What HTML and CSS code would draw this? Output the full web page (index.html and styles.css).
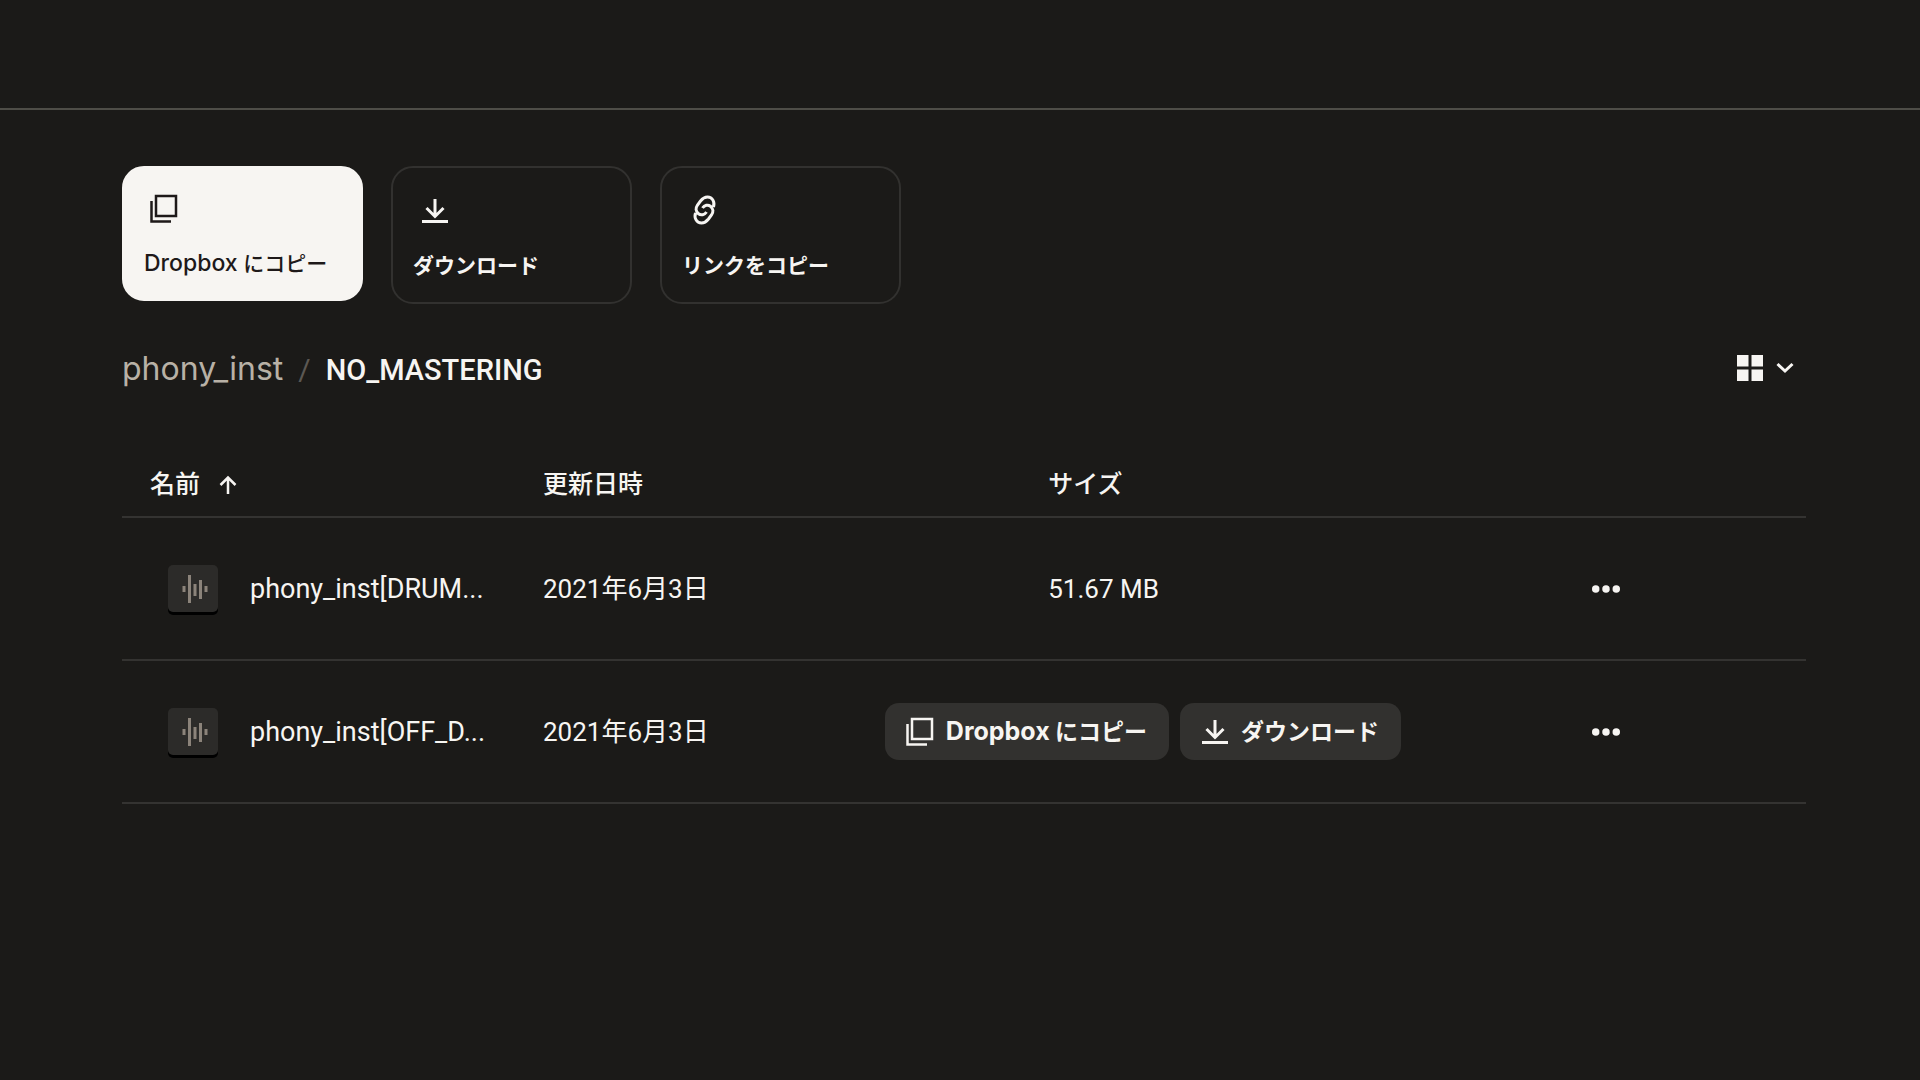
FILE: index.html
```html
<!DOCTYPE html>
<html lang="ja">
<head>
<meta charset="utf-8">
<title>NO_MASTERING</title>
<link rel="stylesheet" href="styles.css">
</head>
<body>
<svg class="sprite" aria-hidden="true">
  <symbol id="copy" viewBox="0 0 30 30"><path d="M7 2H27V22H7ZM2.500 7V27.500H22" fill="none" stroke="currentColor" stroke-width="2.500"/></symbol>
  <symbol id="download" viewBox="0 0 30 30"><path d="M15 3V20M6.500 12L15 20.500L23.500 12M2 25.500H28" fill="none" stroke="currentColor" stroke-width="3"/></symbol>
</svg>
<header class="topbar"></header>
<main class="content">
  <div class="actions">
    <button class="card card-primary"><svg class="icon"><use href="#copy"/></svg><span><span class="latin">Dropbox</span> にコピー</span></button>
    <button class="card"><svg class="icon"><use href="#download"/></svg><span>ダウンロード</span></button>
    <button class="card"><svg class="icon link-icon" viewBox="0 0 30 30"><path d="M23.500 11C25 6 22.500 1 17.500 1C14.500 1 12.500 2.500 10.500 5L7.500 9C5.500 12 5.500 15.500 8.500 17.800C11 19.700 14.500 19 16.500 16M5.500 17C4 22 6.500 27 11.500 27C14.500 27 16.500 25.500 18.500 23L21.500 19C23.500 16 23.500 12.500 20.500 10.200C18 8.300 14.500 9 12.500 12" fill="none" stroke="currentColor" stroke-width="3"/></svg><span>リンクをコピー</span></button>
  </div>
  <div class="pathbar">
    <nav class="crumbs"><a href="#">phony_inst</a><span class="slash">/</span><h1>NO_MASTERING</h1></nav>
    <button class="view" aria-label="表示の切り替え">
      <svg class="grid-icon" viewBox="0 0 26 26"><path d="M0 0H11.500V11.500H0ZM14.500 0H26V11.500H14.500ZM0 14.500H11.500V26H0ZM14.500 14.500H26V26H14.500Z" fill="currentColor"/></svg>
      <svg class="chevron" viewBox="0 0 18 12"><path d="M1.500 2L9 9L16.500 2" fill="none" stroke="currentColor" stroke-width="3"/></svg>
    </button>
  </div>
  <table class="files">
    <colgroup><col class="c-name"><col class="c-date"><col class="c-gap"><col class="c-size"><col class="c-menu"></colgroup>
    <thead>
      <tr><th class="first"><span class="sort">名前 <svg class="arrow" viewBox="0 0 18 20"><path d="M9 19V3M1.500 10L9 2.500L16.500 10" fill="none" stroke="currentColor" stroke-width="2.500"/></svg></span></th><th colspan="2">更新日時</th><th>サイズ</th><th></th></tr>
    </thead>
    <tbody>
      <tr>
        <td><div class="file"><span class="thumb"><svg class="wave" viewBox="0 0 26 30"><path d="M2 12V18M7.500 1V29M13 10V22M18.500 6V25M24 12V18" fill="none" stroke="currentColor" stroke-width="3"/></svg></span><a href="#">phony_inst[DRUM...</a></div></td>
        <td colspan="2">2021年6月3日</td>
        <td>51.67 MB</td>
        <td><button class="more" aria-label="その他"><svg class="dots" viewBox="0 0 30 8"><circle cx="4" cy="4" r="4"/><circle cx="15" cy="4" r="4"/><circle cx="26" cy="4" r="4"/></svg></button></td>
      </tr>
      <tr>
        <td><div class="file"><span class="thumb"><svg class="wave" viewBox="0 0 26 30"><path d="M2 12V18M7.500 1V29M13 10V22M18.500 6V25M24 12V18" fill="none" stroke="currentColor" stroke-width="3"/></svg></span><a href="#">phony_inst[OFF_D...</a></div></td>
        <td>2021年6月3日</td>
        <td colspan="2"><div class="row-actions"><button class="pill"><svg class="icon"><use href="#copy"/></svg><span><span class="latin">Dropbox</span> にコピー</span></button><button class="pill"><svg class="icon"><use href="#download"/></svg>ダウンロード</button></div></td>
        <td><button class="more" aria-label="その他"><svg class="dots" viewBox="0 0 30 8"><circle cx="4" cy="4" r="4"/><circle cx="15" cy="4" r="4"/><circle cx="26" cy="4" r="4"/></svg></button></td>
      </tr>
    </tbody>
  </table>
</main>
</body>
</html>
```
FILE: styles.css
```css
* { box-sizing: border-box; }
body {
  margin: 0;
  background: #1b1a18;
  color: #f7f5f2;
  font-family: Roboto, "Noto Sans CJK JP", sans-serif;
  font-size: 26px;
  line-height: 32px;
}
button {
  font-family: Inter, "Noto Sans CJK JP", sans-serif;
  line-height: 32px;
  color: inherit;
  background: none;
  border: 0;
  padding: 0;
  cursor: pointer;
}
a { color: inherit; text-decoration: none; }
svg { display: block; flex: none; }
.sprite { position: absolute; width: 0; height: 0; }
.icon { width: 30px; height: 30px; }
.topbar { height: 110px; border-bottom: 2px solid #4e4d47; }
.content { padding: 56px 114px 56px 122px; }

.actions { display: flex; align-items: flex-start; gap: 28px; }
.card {
  width: 241px;
  height: 138px;
  padding: 28px 20px 0;
  border: 2px solid #32312f;
  border-radius: 22px;
  display: flex;
  flex-direction: column;
  align-items: flex-start;
  gap: 24px;
  font-size: 21px;
  font-weight: 700;
  white-space: nowrap;
}
.card .icon { margin-left: 7px; }
.card .link-icon { margin-left: 8px; overflow: visible; }
.card-primary {
  height: 135px;
  padding-top: 26px;
  background: #f7f5f2;
  border-color: #f7f5f2;
  color: #1e1919;
  font-weight: 500;
}
.card-primary .icon { margin-left: 5px; }
.card .latin { font-size: 23px; line-height: 24px; }

.pathbar {
  display: flex;
  align-items: center;
  justify-content: space-between;
  height: 40px;
  margin-top: 44px;
  padding-right: 12px;
}
.crumbs { display: flex; align-items: baseline; gap: 15px; padding-top: 2px; font-size: 30px; }
.crumbs a { font-family: Inter, sans-serif; font-size: 32px; color: #b8b1a6; }
.crumbs h1 { margin: 0; font-size: 29px; font-weight: 500; }
.slash { color: #5c5853; }
.view { display: flex; align-items: center; gap: 13px; }
.grid-icon { width: 26px; height: 26px; }
.chevron { width: 18px; height: 12px; }

.files {
  width: 100%;
  margin-top: 66px;
  border-collapse: collapse;
  table-layout: fixed;
}
.c-name { width: 25%; }
.c-date { width: 20.3%; }
.c-gap { width: 9.7%; }
.c-size { width: 32.3%; }
th {
  height: 63px;
  padding: 0;
  text-align: left;
  font-size: 25px;
  font-weight: 500;
  border-bottom: 2px solid #343331;
}
th.first { padding-left: 28px; }
.sort { display: flex; align-items: center; gap: 19px; }
.arrow { width: 18px; height: 20px; }
td { height: 143px; padding: 0; border-bottom: 2px solid #343331; }
.file { display: flex; align-items: center; gap: 32px; padding-left: 46px; font-size: 27px; }
.thumb {
  display: grid;
  place-items: center;
  width: 50px;
  height: 47px;
  padding-left: 3px;
  border-radius: 5px;
  background: #2c2b29;
  box-shadow: 0 3px 0 #000;
}
.wave { width: 26px; height: 30px; color: #8b837a; }
.more { display: block; padding: 12px 0; }
.dots { width: 28px; height: 8px; fill: currentColor; }
.row-actions { display: flex; gap: 11px; }
.pill {
  display: flex;
  align-items: center;
  gap: 11px;
  height: 57px;
  padding: 0 22px 0 20px;
  border-radius: 14px;
  background: #32312f;
  font-size: 23px;
  font-weight: 700;
  white-space: nowrap;
}
.pill .latin { font-size: 25px; line-height: 24px; }
```
